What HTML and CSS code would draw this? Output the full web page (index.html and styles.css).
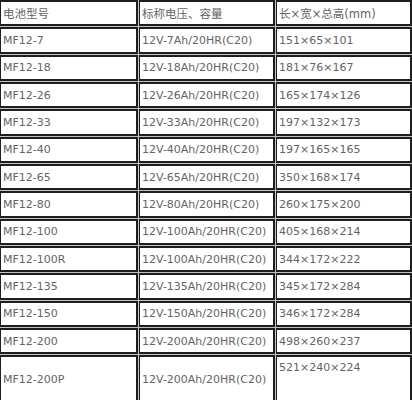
FILE: index.html
```html
<!DOCTYPE html>
<html lang="zh">
<head>
<meta charset="utf-8">
<link rel="stylesheet" href="styles.css">
</head>
<body>
<div class="spec">
  <div class="cell cjk">电池型号</div><div class="cell cjk">标称电压、容量</div><div class="cell cjk">长×宽×总高(mm)</div>
  <div class="cell">MF12-7</div><div class="cell">12V-7Ah/20HR(C20)</div><div class="cell">151×65×101</div>
  <div class="cell">MF12-18</div><div class="cell">12V-18Ah/20HR(C20)</div><div class="cell">181×76×167</div>
  <div class="cell">MF12-26</div><div class="cell">12V-26Ah/20HR(C20)</div><div class="cell">165×174×126</div>
  <div class="cell">MF12-33</div><div class="cell">12V-33Ah/20HR(C20)</div><div class="cell">197×132×173</div>
  <div class="cell">MF12-40</div><div class="cell">12V-40Ah/20HR(C20)</div><div class="cell">197×165×165</div>
  <div class="cell">MF12-65</div><div class="cell">12V-65Ah/20HR(C20)</div><div class="cell">350×168×174</div>
  <div class="cell">MF12-80</div><div class="cell">12V-80Ah/20HR(C20)</div><div class="cell">260×175×200</div>
  <div class="cell">MF12-100</div><div class="cell">12V-100Ah/20HR(C20)</div><div class="cell">405×168×214</div>
  <div class="cell">MF12-100R</div><div class="cell">12V-100Ah/20HR(C20)</div><div class="cell">344×172×222</div>
  <div class="cell">MF12-135</div><div class="cell">12V-135Ah/20HR(C20)</div><div class="cell">345×172×284</div>
  <div class="cell">MF12-150</div><div class="cell">12V-150Ah/20HR(C20)</div><div class="cell">346×172×284</div>
  <div class="cell">MF12-200</div><div class="cell">12V-200Ah/20HR(C20)</div><div class="cell">498×260×237</div>
  <div class="cell">MF12-200P</div><div class="cell">12V-200Ah/20HR(C20)</div><div class="cell top">521×240×224</div>
</div>
</body>
</html>
```
FILE: styles.css
```css
html, body {
  margin: 0;
  padding: 0;
  background: #ffffff;
}
.spec {
  display: grid;
  width: 412px;
  grid-template-columns: 138px 136px 136px;
  grid-template-rows: repeat(13, 26.33px) 48px;
  gap: 1px;
  background: #c4c4c4;
  font-family: "DejaVu Sans", "Noto Sans CJK SC", sans-serif;
  font-size: 11px;
  color: #646464;
}
.cell {
  box-sizing: border-box;
  background: #ffffff;
  border: 2px solid #1e1e1e;
  border-left-width: 1.5px;
  border-right-width: 2.5px;
  display: flex;
  align-items: center;
  padding-left: 2px;
  white-space: nowrap;
  overflow: hidden;
}
.cell.cjk {
  font-size: 11.5px;
}
.cell.top {
  align-items: flex-start;
  padding-top: 4px;
}
```
